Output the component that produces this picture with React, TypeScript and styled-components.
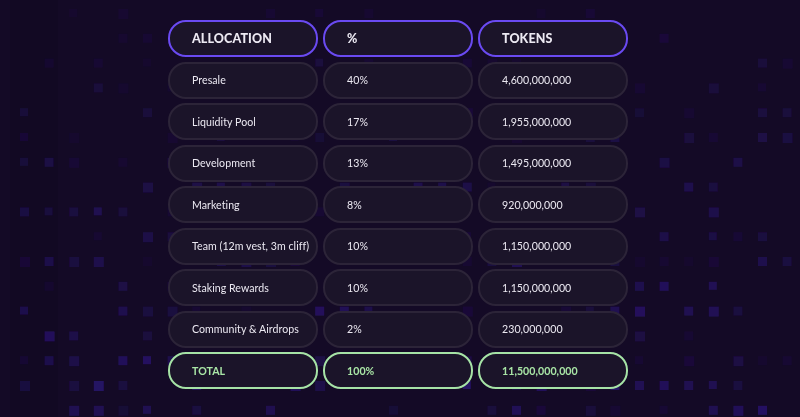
import React from 'react';
import styled, { createGlobalStyle } from 'styled-components';

const GlobalStyle = createGlobalStyle`
  html, body {
    margin: 0;
    padding: 0;
    background: #130a24;
  }
  #root {
    min-height: 417px;
  }
`;

type Row = { name: string; pct: string; tokens: string };

const rows: Row[] = [
  { name: 'Presale', pct: '40%', tokens: '4,600,000,000' },
  { name: 'Liquidity Pool', pct: '17%', tokens: '1,955,000,000' },
  { name: 'Development', pct: '13%', tokens: '1,495,000,000' },
  { name: 'Marketing', pct: '8%', tokens: '920,000,000' },
  { name: 'Team (12m vest, 3m cliff)', pct: '10%', tokens: '1,150,000,000' },
  { name: 'Staking Rewards', pct: '10%', tokens: '1,150,000,000' },
  { name: 'Community & Airdrops', pct: '2%', tokens: '230,000,000' },
];

// deterministic scatter of pixel squares for the backdrop
const squares = (() => {
  const out: { x: number; y: number; o: number; s: number }[] = [];
  let seed = 11;
  const rnd = () => {
    seed = (seed * 9301 + 49297) % 233280;
    return seed / 233280;
  };
  for (let j = 0; j < 17; j++) {
    for (let i = 0; i < 33; i++) {
      const x = 20 + i * 24.6;
      const y = 9 + j * 24.8;
      const r = rnd();
      const depth = j / 16;
      if (r > 0.3 + depth * 0.25) continue;
      const o = 0.05 + rnd() * (0.06 + depth * 0.3);
      out.push({ x, y, o, s: 8 + Math.round(rnd() * 2) });
    }
  }
  return out;
})();

const Backdrop = () => (
  <BackdropSvg width="800" height="417" viewBox="0 0 800 417">
    <defs>
      <filter id="soft">
        <feGaussianBlur stdDeviation="0.6" />
      </filter>
    </defs>
    <rect x="10" y="0" width="48" height="417" fill="#0e0720" opacity="0.4" />
    <g filter="url(#soft)">
      {squares.map((q, k) => (
        <rect key={k} x={q.x} y={q.y} width={q.s} height={q.s} fill="#4222c8" opacity={q.o} />
      ))}
    </g>
  </BackdropSvg>
);

export default function App() {
  return (
    <>
      <GlobalStyle />
      <Page>
        <Backdrop />
        <Table>
          <Cell $kind="head">ALLOCATION</Cell>
          <Cell $kind="head">%</Cell>
          <Cell $kind="head">TOKENS</Cell>
          {rows.map((r) => (
            <React.Fragment key={r.name}>
              <Cell>{r.name}</Cell>
              <Cell>{r.pct}</Cell>
              <Cell>{r.tokens}</Cell>
            </React.Fragment>
          ))}
          <Cell $kind="total">TOTAL</Cell>
          <Cell $kind="total">100%</Cell>
          <Cell $kind="total">11,500,000,000</Cell>
        </Table>
      </Page>
    </>
  );
}

const Page = styled.div`
  position: relative;
  width: 800px;
  height: 417px;
  overflow: hidden;
  background: #140a26;
  display: flex;
  justify-content: center;
  align-items: flex-start;
  padding: 20px 4px 0 0;
  box-sizing: border-box;
  font-family: 'Lato', 'Open Sans', sans-serif;
`;

const BackdropSvg = styled.svg`
  position: absolute;
  left: 0;
  top: 0;
  pointer-events: none;
`;

const Table = styled.div`
  position: relative;
  display: grid;
  grid-template-columns: repeat(3, 150px);
  grid-auto-rows: 37px;
  column-gap: 5px;
  row-gap: 4.5px;
`;

const Cell = styled.div<{ $kind?: 'head' | 'total' }>`
  display: flex;
  align-items: center;
  box-sizing: border-box;
  padding-left: 22px;
  border-radius: 18px;
  background: #1b1429;
  border: 2px solid
    ${(p) => (p.$kind === 'head' ? '#6a4af2' : p.$kind === 'total' ? '#a6e3a6' : '#2c2438')};
  color: ${(p) => (p.$kind === 'total' ? '#a9e6a6' : '#ece9f2')};
  font-size: ${(p) => (p.$kind === 'head' ? '12.5px' : '10.6px')};
  font-weight: ${(p) => (p.$kind === 'head' ? 900 : p.$kind === 'total' ? 700 : 400)};
  letter-spacing: ${(p) => (p.$kind === 'head' ? '0.1px' : '0.05px')};
  white-space: nowrap;
`;
